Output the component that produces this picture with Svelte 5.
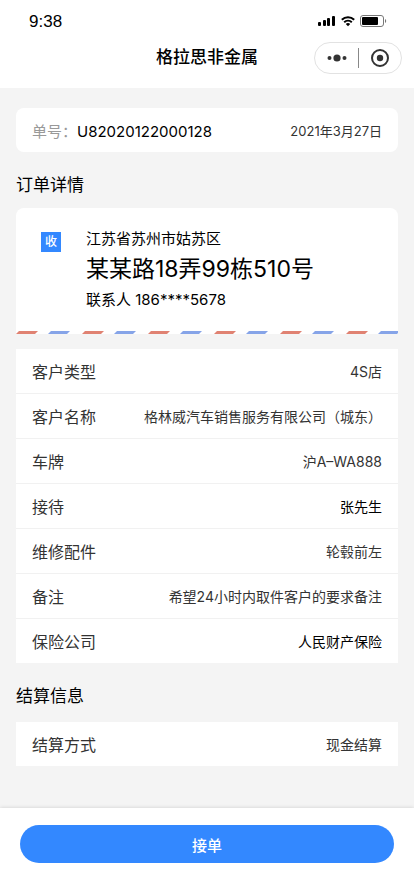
<script>
  const order = {
    no: "U82020122000128",
    date: "2021年3月27日",
    region: "江苏省苏州市姑苏区",
    street: "某某路18弄99栋510号",
    contact: "联系人 186****5678",
  };

  const details = [
    { label: "客户类型", value: "4S店" },
    { label: "客户名称", value: "格林威汽车销售服务有限公司（城东）" },
    { label: "车牌", value: "沪A–WA888" },
    { label: "接待", value: "张先生", dark: true },
    { label: "维修配件", value: "轮毂前左" },
    { label: "备注", value: "希望24小时内取件客户的要求备注" },
    { label: "保险公司", value: "人民财产保险", dark: true },
  ];

  const payment = [{ label: "结算方式", value: "现金结算" }];

  let accepted = $state(false);
</script>

{#snippet rows(items)}
  <dl class="rows">
    {#each items as item}
      <div class="row">
        <dt>{item.label}</dt>
        <dd class:dark={item.dark}>{item.value}</dd>
      </div>
    {/each}
  </dl>
{/snippet}

<div class="page">
  <header>
    <div class="status">
      <span class="time">9:38</span>
      <div class="status-icons">
        <svg width="18" height="12" viewBox="0 0 18 12">
          <rect x="0" y="7" width="3" height="4" rx="1" />
          <rect x="5" y="5" width="3" height="6" rx="1" />
          <rect x="9" y="3" width="3" height="8" rx="1" />
          <rect x="14" y="1" width="3" height="10" rx="1" />
        </svg>
        <svg width="14" height="12" viewBox="0 0 14 12">
          <g fill="none" stroke="#000" stroke-width="2">
            <path d="M.8 4.7a8.9 8.9 0 0 1 12.4 0" />
            <path d="M3.2 7.2a5.5 5.5 0 0 1 7.6 0" />
          </g>
          <path d="M7 11.2 4.8 9a3.2 3.2 0 0 1 4.4 0z" />
        </svg>
        <svg width="27" height="12" viewBox="0 0 27 12">
          <rect x=".5" y=".5" width="23" height="11" rx="2.5" fill="none" stroke="#777" />
          <rect x="2" y="2" width="16" height="8" rx="1" />
          <path d="M25 4v4c1.6-.6 1.6-3.4 0-4z" fill="#777" />
        </svg>
      </div>
    </div>
    <div class="nav">
      <h1>格拉思非金属</h1>
      <div class="capsule">
        <button type="button" aria-label="更多">
          <svg width="22" height="20" viewBox="0 0 22 20" fill="#333">
            <circle cx="4.5" cy="10" r="2" />
            <circle cx="12" cy="10" r="3.6" />
            <circle cx="19.5" cy="10" r="2" />
          </svg>
        </button>
        <button type="button" aria-label="关闭">
          <svg width="20" height="20" viewBox="0 0 20 20" fill="#333">
            <circle cx="10" cy="10" r="8" fill="none" stroke="#333" stroke-width="2" />
            <circle cx="10" cy="10" r="3.2" />
          </svg>
        </button>
      </div>
    </div>
  </header>

  <main>
    <section class="card number">
      <span class="no"><span class="no-label">单号：</span>{order.no}</span>
      <span class="date">{order.date}</span>
    </section>

    <section>
      <h2>订单详情</h2>
      <div class="card address">
        <div class="address-body">
          <span class="tag">收</span>
          <div class="address-text">
            <p>{order.region}</p>
            <p class="street">{order.street}</p>
            <p>{order.contact}</p>
          </div>
        </div>
        <svg class="stripes" width="100%" height="3">
          <pattern id="stripes" width="66" height="3" patternUnits="userSpaceOnUse">
            <path d="M3 0h19l-3 3H0z" fill="#e08272" />
            <path d="M35 0h19l-3 3H32z" fill="#86a4e8" />
          </pattern>
          <rect width="100%" height="3" fill="url(#stripes)" />
        </svg>
      </div>
      {@render rows(details)}
    </section>

    <section class="payment">
      <h2>结算信息</h2>
      {@render rows(payment)}
    </section>
  </main>

  <footer>
    <button type="button" class="accept" disabled={accepted} onclick={() => (accepted = true)}>接单</button>
  </footer>
</div>

<style>
  :global(body) {
    margin: 0;
    background-color: #f4f4f4;
  }
  .page {
    display: flex;
    flex-direction: column;
    min-height: 100vh;
    font-family: Inter, "Noto Sans CJK SC", sans-serif;
    color: #000;
  }
  h1,
  h2,
  p,
  dl,
  dd {
    margin: 0;
  }
  svg {
    display: block;
  }
  button {
    padding: 0;
    border: none;
    background: none;
    font-family: inherit;
    cursor: pointer;
  }
  header {
    height: 88px;
    background-color: #fff;
  }
  .status {
    display: flex;
    align-items: center;
    justify-content: space-between;
    height: 42px;
    padding: 0 27px 0 29px;
  }
  .time {
    padding-top: 2px;
    font-family: "Liberation Sans", sans-serif;
    font-size: 17px;
  }
  .status-icons {
    display: flex;
    gap: 5px;
  }
  .nav {
    display: grid;
    grid-template-columns: 1fr auto 1fr;
    align-items: center;
    height: 32px;
    padding: 0 12px;
  }
  h1 {
    grid-column: 2;
    font-size: 17px;
    line-height: 24px;
    font-weight: 500;
    padding-bottom: 2px;
  }
  .capsule {
    display: flex;
    align-items: center;
    justify-self: end;
    box-sizing: border-box;
    width: 88px;
    height: 32px;
    border: 1px solid #e2e2e2;
    border-radius: 16px;
  }
  .capsule button {
    flex: 1;
    display: flex;
    justify-content: center;
  }
  .capsule button + button {
    border-left: 1px solid #888;
  }
  main {
    flex: 1;
    padding: 20px 16px;
  }
  .card {
    background-color: #fff;
    border-radius: 8px;
  }
  .number {
    display: flex;
    align-items: center;
    justify-content: space-between;
    height: 44px;
    padding: 0 16px;
  }
  .no {
    font-size: 15px;
  }
  .no-label {
    color: #999;
  }
  .date {
    font-size: 13px;
    color: #333;
  }
  h2 {
    padding: 21px 0 11px;
    font-size: 17px;
    line-height: 24px;
    font-weight: 400;
  }
  .payment h2 {
    padding-bottom: 14px;
  }
  .address {
    border-radius: 8px 8px 0 0;
    margin-bottom: 15px;
  }
  .address-body {
    display: flex;
    gap: 25px;
    padding: 19px 25px;
  }
  .tag {
    width: 20px;
    height: 20px;
    margin-top: 5px;
    background-color: #3388ff;
    color: #fff;
    font-size: 12px;
    line-height: 20px;
    font-weight: 500;
    text-align: center;
  }
  .address-text {
    font-size: 15px;
    line-height: 24px;
  }
  .street {
    font-size: 23px;
    line-height: 37px;
  }
  .rows {
    background-color: #fff;
  }
  .row {
    display: flex;
    align-items: center;
    justify-content: space-between;
    height: 44px;
    padding: 0 16px;
  }
  .row + .row {
    border-top: 1px solid #f1f1f1;
  }
  dt {
    font-size: 16px;
    color: #333;
  }
  dd {
    font-size: 14px;
    color: #333;
  }
  dd.dark {
    color: #000;
  }
  footer {
    padding: 17px 20px 33px;
    background-color: #fff;
    box-shadow: 0 0 4px rgba(0, 0, 0, 0.16);
  }
  .accept {
    display: block;
    width: 100%;
    height: 38px;
    border-radius: 19px;
    background-color: #3388ff;
    color: #fff;
    font-size: 15px;
    font-weight: 500;
  }
</style>
